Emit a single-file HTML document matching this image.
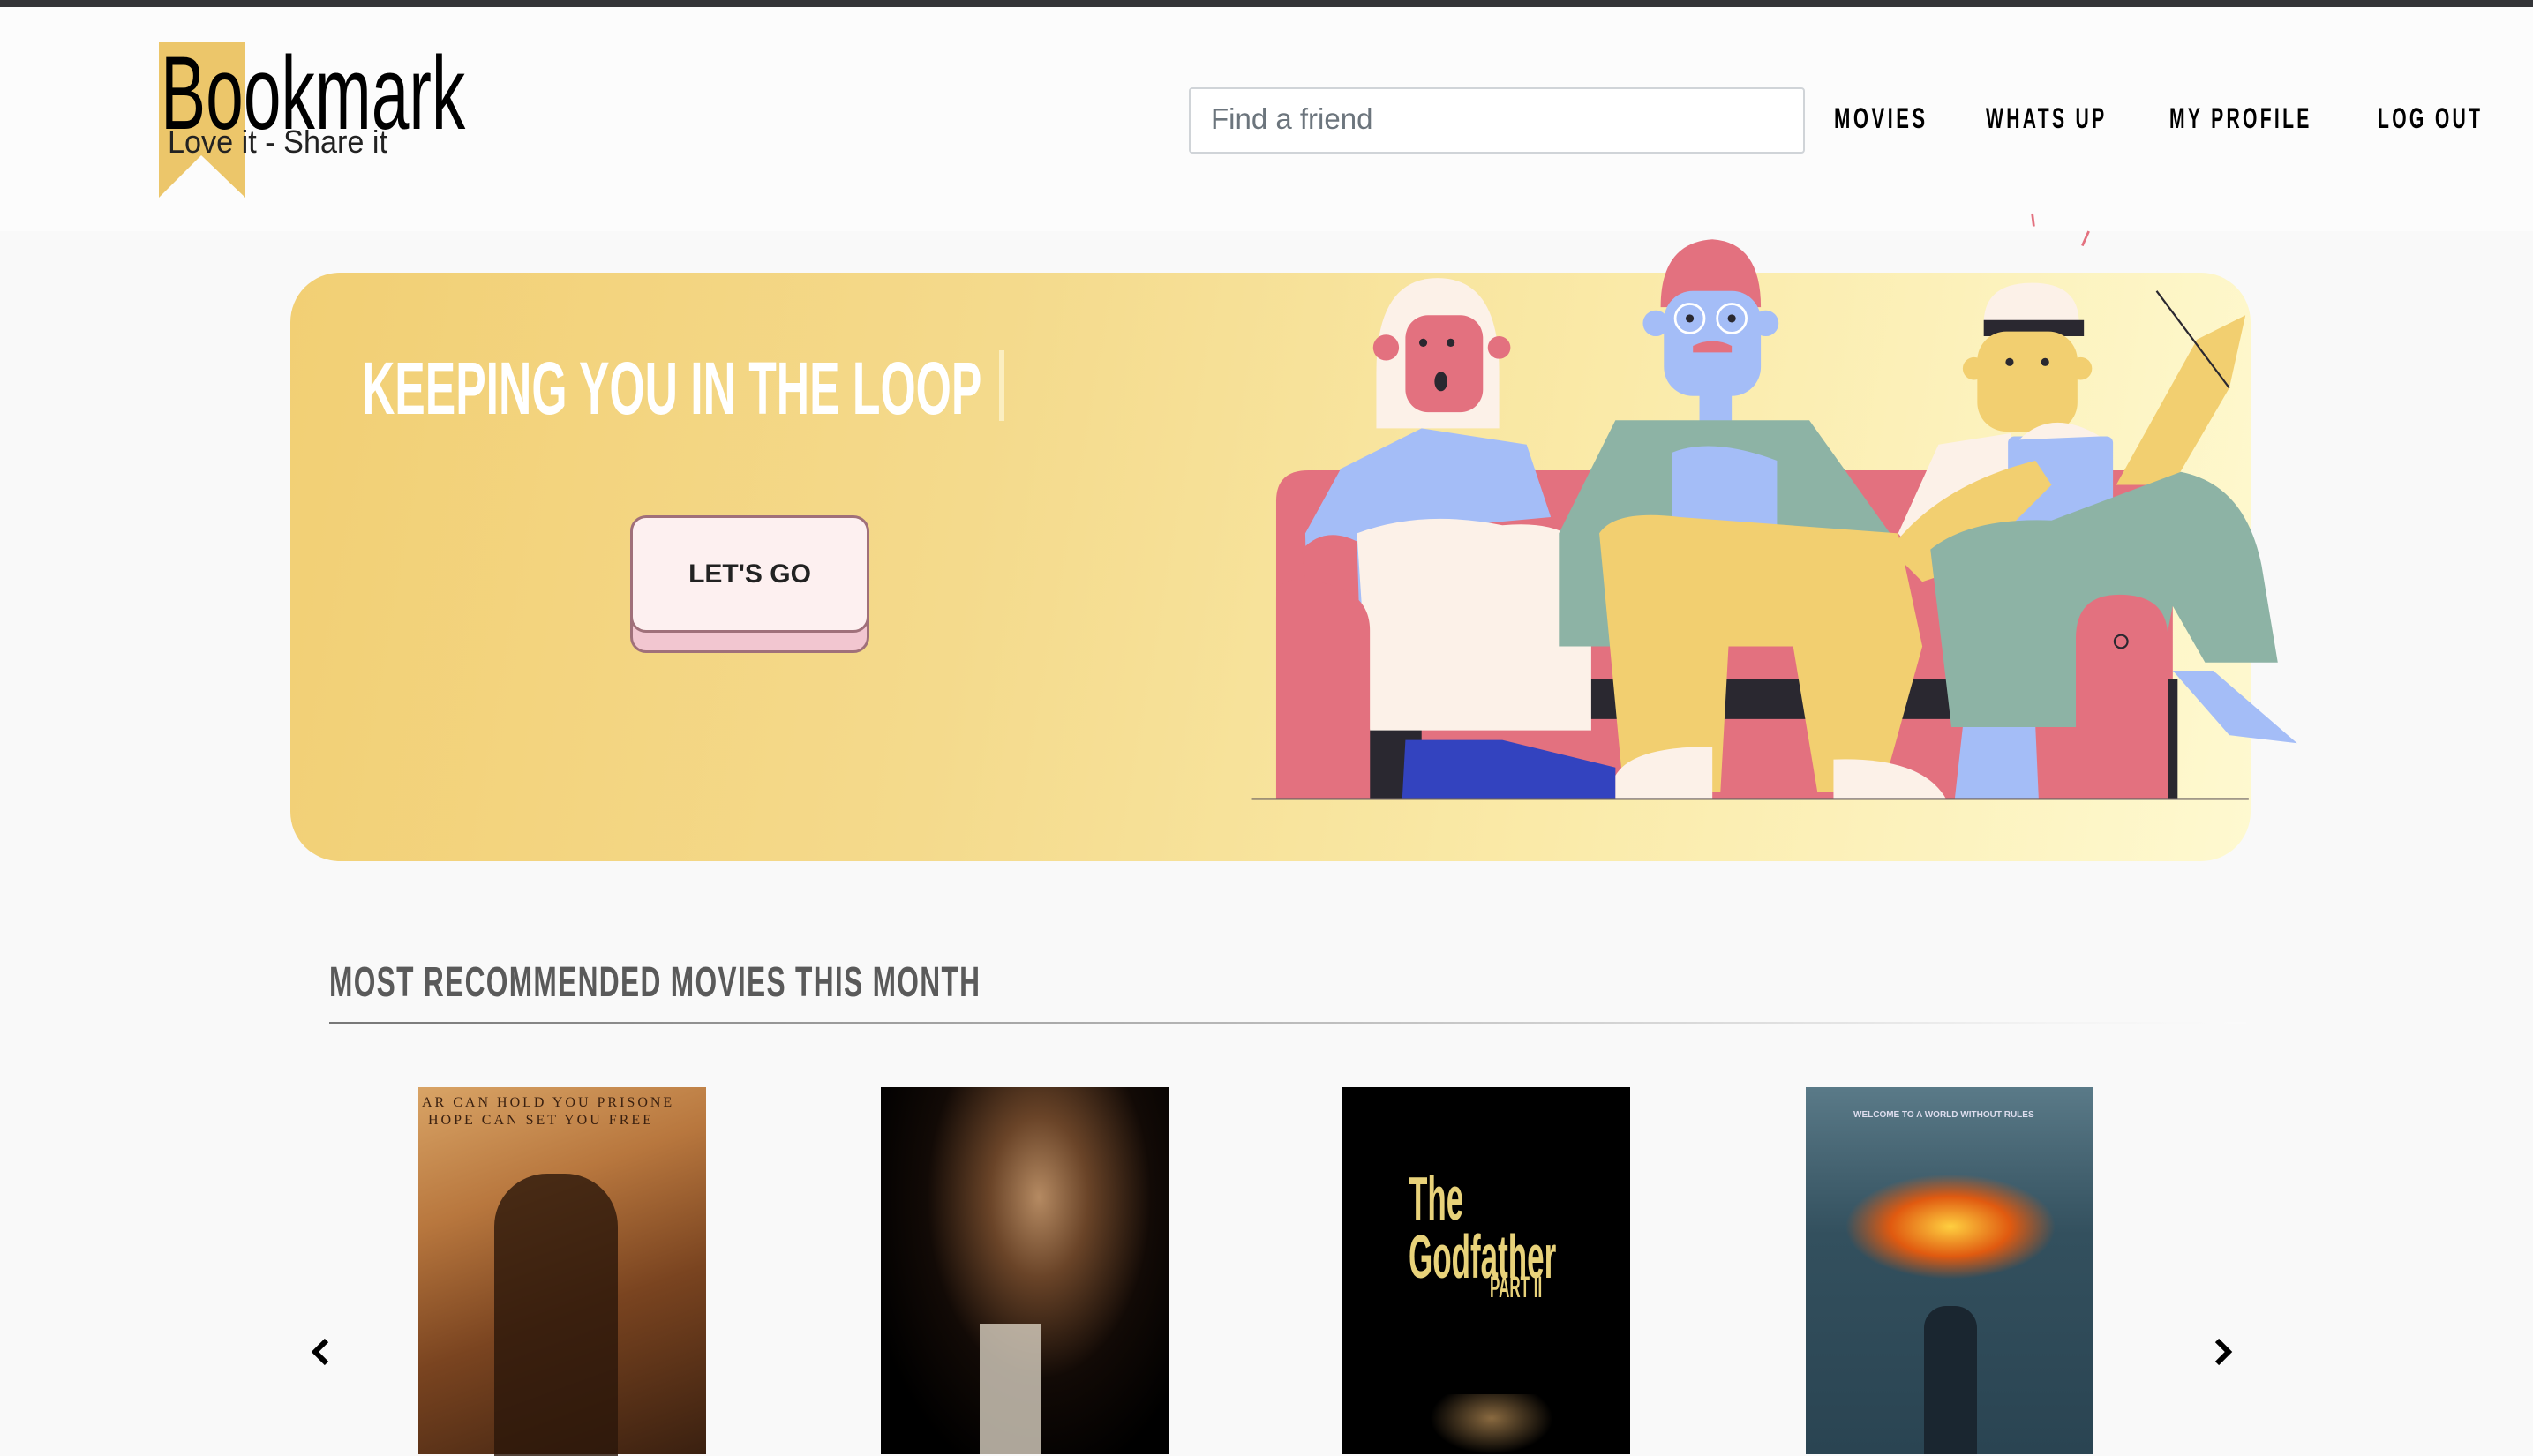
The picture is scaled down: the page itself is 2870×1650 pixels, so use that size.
<!DOCTYPE html>
<html><head><meta charset="utf-8">
<style>
*{margin:0;padding:0;box-sizing:border-box}
body{width:2870px;height:1648px;overflow:hidden;background:#f9f9f9;font-family:"Liberation Sans",sans-serif;position:relative}
.abs{position:absolute}
.cond{display:inline-block;transform-origin:0 0;white-space:nowrap}
</style></head><body>
<div class="abs" style="left:0;top:0;width:2870px;height:8px;background:#343538"></div>
<div class="abs" style="left:0;top:8px;width:2870px;height:254px;background:#fcfcfc"></div>
<svg class="abs" style="left:180px;top:48px" width="100" height="176" viewBox="0 0 100 176"><polygon points="0,0 98,0 98,176 48,128 0,176" fill="#ecc66a"/></svg>
<div class="abs cond" style="left:182px;top:38px;font-size:118px;color:#000;transform:scaleX(0.65)">Bookmark</div>
<div class="abs cond" style="left:190px;top:140px;font-size:36px;color:#222;transform:scaleX(0.95)">Love it - Share it</div>
<div class="abs" style="left:1347px;top:99px;width:698px;height:75px;background:#fff;border:2px solid #d0d4d8;border-radius:4px"></div>
<div class="abs" style="left:1372px;top:116px;font-size:33px;color:#6c757d">Find a friend</div>
<div class="abs cond" style="left:2078px;top:116px;font-size:32px;font-weight:bold;letter-spacing:5px;transform:scaleX(0.69)">MOVIES</div>
<div class="abs cond" style="left:2250px;top:116px;font-size:32px;font-weight:bold;letter-spacing:5px;transform:scaleX(0.66)">WHATS UP</div>
<div class="abs cond" style="left:2458px;top:116px;font-size:32px;font-weight:bold;letter-spacing:5px;transform:scaleX(0.66)">MY PROFILE</div>
<div class="abs cond" style="left:2694px;top:116px;font-size:32px;font-weight:bold;letter-spacing:5px;transform:scaleX(0.66)">LOG OUT</div>
<div class="abs" style="left:329px;top:309px;width:2221px;height:667px;border-radius:56px;background:linear-gradient(100deg,#f2cf74 0%,#f4da8c 35%,#faeaa8 65%,#fef9d0 100%)"></div>
<div class="abs cond" style="left:410px;top:392px;font-size:84px;font-weight:bold;color:#fff;transform:scaleX(0.615)">KEEPING YOU IN THE LOOP</div>
<div class="abs" style="left:1132px;top:397px;width:6px;height:80px;background:#fbeec0"></div>
<div class="abs" style="left:714px;top:610px;width:271px;height:130px;background:#f2c6d0;border:3px solid #a0707a;border-radius:18px"></div>
<div class="abs" style="left:714px;top:584px;width:271px;height:133px;background:#fdf0f0;border:3px solid #a0707a;border-radius:18px;text-align:center;line-height:127px;font-size:30px;font-weight:bold;color:#222">LET'S GO</div>
<div class="abs cond" style="left:373px;top:1086px;font-size:48px;font-weight:bold;color:#5a5a5a;letter-spacing:2px;transform:scaleX(0.66)">MOST RECOMMENDED MOVIES THIS MONTH</div>
<div class="abs" style="left:373px;top:1158px;width:2172px;height:3px;background:linear-gradient(90deg,#777,#bbb 50%,#f4f4f4 90%,#fafafa)"></div>
<div class="abs" style="left:474px;top:1232px;width:326px;height:416px;background:linear-gradient(160deg,#d9a466 0%,#b8773e 30%,#7a4420 60%,#3a2010 100%)"></div>
<div class="abs" style="left:478px;top:1240px;font-size:16px;color:#3a2010;letter-spacing:3px;font-family:'Liberation Serif',serif;line-height:20px">AR CAN HOLD YOU PRISONE<br>&nbsp;HOPE CAN SET YOU FREE</div>
<div class="abs" style="left:560px;top:1330px;width:140px;height:320px;background:#2a160a;border-radius:60px 60px 0 0;opacity:.8"></div>
<div class="abs" style="left:998px;top:1232px;width:326px;height:416px;background:radial-gradient(ellipse at 55% 30%,#b58a62 0%,#6a4428 22%,#120a06 50%,#000 80%)"></div>
<div class="abs" style="left:1110px;top:1500px;width:70px;height:148px;background:#d8d0c0;opacity:.8"></div>
<div class="abs" style="left:1521px;top:1232px;width:326px;height:416px;background:#000"></div>
<div class="abs cond" style="left:1596px;top:1325px;font-size:70px;font-weight:bold;color:#e8d27a;line-height:66px;transform:scaleX(0.5)">The<br>Godfather</div>
<div class="abs cond" style="left:1688px;top:1440px;font-size:34px;font-weight:bold;color:#e8d27a;transform:scaleX(0.5)">PART II</div>
<div class="abs" style="left:1620px;top:1580px;width:140px;height:68px;background:radial-gradient(ellipse at 50% 40%,#8a6a40,#000 70%)"></div>
<div class="abs" style="left:2046px;top:1232px;width:326px;height:416px;background:linear-gradient(180deg,#5a7a88 0%,#33505e 40%,#2a4452 100%)"></div>
<div class="abs" style="left:2090px;top:1330px;width:240px;height:120px;background:radial-gradient(ellipse,#ffd040 0%,#e05a10 40%,rgba(60,70,80,0) 70%)"></div>
<div class="abs" style="left:2100px;top:1258px;font-size:10px;color:#dde;font-weight:bold">WELCOME TO A WORLD WITHOUT RULES</div>
<div class="abs" style="left:2180px;top:1480px;width:60px;height:168px;background:#1a2630;border-radius:25px 25px 0 0"></div>
<svg class="abs" style="left:350px;top:1515px" width="26" height="34" viewBox="0 0 26 34"><path d="M20 4 L7 17 L20 30" stroke="#000" stroke-width="6" fill="none"/></svg>
<svg class="abs" style="left:2506px;top:1515px" width="26" height="34" viewBox="0 0 26 34"><path d="M6 4 L19 17 L6 30" stroke="#000" stroke-width="6" fill="none"/></svg>
<svg class="abs" style="left:0;top:0" width="2870" height="1648" viewBox="0 0 1568 900">
<g stroke="none">
<path d="M1258 132 L1259 140 M1293 143 L1289 152" stroke="#e3717f" stroke-width="1.5"/>
<path d="M790 310 Q790 291 810 291 L1345 291 L1345 495 L790 495 Z" fill="#e3717f"/>
<rect x="848" y="420" width="500" height="75" fill="#2a2830"/>
<rect x="880" y="445" width="440" height="50" fill="#e3717f"/>
<path d="M852 230 Q852 172 890 172 Q928 172 928 230 L928 265 L852 265 Z" fill="#fcf1e8"/>
<rect x="870" y="195" width="48" height="60" rx="14" fill="#e3717f"/>
<circle cx="858" cy="215" r="8" fill="#e3717f"/><circle cx="928" cy="215" r="7" fill="#e3717f"/>
<circle cx="881" cy="212" r="2.5" fill="#2a2830"/><circle cx="898" cy="212" r="2.5" fill="#2a2830"/><ellipse cx="892" cy="236" rx="4" ry="6" fill="#2a2830"/>
<path d="M880 265 L830 290 L808 330 L810 410 L840 410 L850 330 L960 320 L945 275 Z" fill="#a4bdf7"/>
<path d="M806 340 Q820 325 840 335 L842 400 L812 405 Z" fill="#e3717f"/>
<path d="M840 330 Q880 315 930 325 Q985 320 985 360 L985 452 L848 452 Z" fill="#fcf1e8"/>
<path d="M870 458 L930 458 L1000 475 L1000 495 L868 495 Z" fill="#3343bf"/>
<path d="M790 370 Q790 355 815 360 Q848 365 848 390 L848 495 L790 495 Z" fill="#e3717f"/>
<path d="M1028 190 Q1028 150 1060 148 Q1090 150 1090 190 Z" fill="#e3717f"/>
<rect x="1030" y="180" width="60" height="65" rx="18" fill="#a4bdf7"/>
<circle cx="1025" cy="200" r="8" fill="#a4bdf7"/><circle cx="1093" cy="200" r="8" fill="#a4bdf7"/>
<circle cx="1046" cy="197" r="9" fill="none" stroke="#fff" stroke-width="1.5"/><circle cx="1072" cy="197" r="9" fill="none" stroke="#fff" stroke-width="1.5"/>
<circle cx="1046" cy="197" r="2.5" fill="#2a2830"/><circle cx="1072" cy="197" r="2.5" fill="#2a2830"/>
<path d="M1048 214 Q1060 208 1072 214 L1072 218 L1048 218 Z" fill="#e3717f"/>
<rect x="1052" y="240" width="20" height="40" fill="#a4bdf7"/>
<path d="M1000 260 L1120 260 L1170 330 L1170 400 L965 400 L965 330 Z" fill="#8db3a5"/>
<path d="M1035 280 Q1060 270 1100 285 L1100 330 Q1070 345 1035 320 Z" fill="#a4bdf7"/>
<path d="M990 330 Q1000 315 1040 320 L1175 330 L1190 400 L1165 490 L1125 490 L1110 400 L1070 400 L1065 490 L1005 490 Z" fill="#f2cf70"/>
<path d="M1000 480 Q1010 462 1060 462 L1060 495 L1000 495 Z" fill="#fcf1e8"/>
<path d="M1135 470 Q1190 468 1205 495 L1135 495 Z" fill="#fcf1e8"/>
<path d="M1228 200 Q1228 175 1258 175 Q1287 175 1287 200 Z" fill="#fcf1e8"/>
<path d="M1228 198 L1290 198 L1290 208 L1228 208 Z" fill="#2a2830"/>
<rect x="1224" y="205" width="62" height="62" rx="18" fill="#f2cf70"/>
<circle cx="1222" cy="228" r="7" fill="#f2cf70"/><circle cx="1288" cy="228" r="7" fill="#f2cf70"/>
<circle cx="1244" cy="224" r="2.5" fill="#2a2830"/><circle cx="1266" cy="224" r="2.5" fill="#2a2830"/>
<path d="M1200 275 L1245 268 L1250 330 L1215 380 L1175 330 Z" fill="#fcf1e8"/>
<rect x="1243" y="270" width="65" height="65" rx="4" fill="#a4bdf7"/>
<path d="M1250 272 Q1270 252 1300 270 Z" fill="#fcf1e8"/>
<path d="M1310 300 L1360 210 L1390 195 L1380 240 L1345 300 Z" fill="#f2cf70"/>
<path d="M1170 340 Q1200 300 1260 285 L1270 300 L1220 350 L1190 360 Z" fill="#f2cf70"/>
<path d="M1195 340 Q1220 320 1270 322 L1350 292 Q1390 300 1400 350 L1410 410 L1365 410 L1345 375 L1330 450 L1208 450 Z" fill="#8db3a5"/>
<path d="M1345 415 L1370 415 L1422 460 L1380 455 Z" fill="#a4bdf7"/>
<path d="M1215 450 L1260 450 L1262 495 L1210 495 Z" fill="#a4bdf7"/>
<path d="M1285 395 Q1285 368 1312 368 Q1342 368 1342 395 L1342 495 L1285 495 Z" fill="#e3717f"/>
<circle cx="1313" cy="397" r="4" fill="none" stroke="#2a2830" stroke-width="1.2"/>
<path d="M1335 180 L1380 240" stroke="#2a2830" stroke-width="1.2"/>
<line x1="775" y1="494.5" x2="1392" y2="494.5" stroke="#6a6060" stroke-width="1.2"/>
</g>
</svg>
</body></html>
